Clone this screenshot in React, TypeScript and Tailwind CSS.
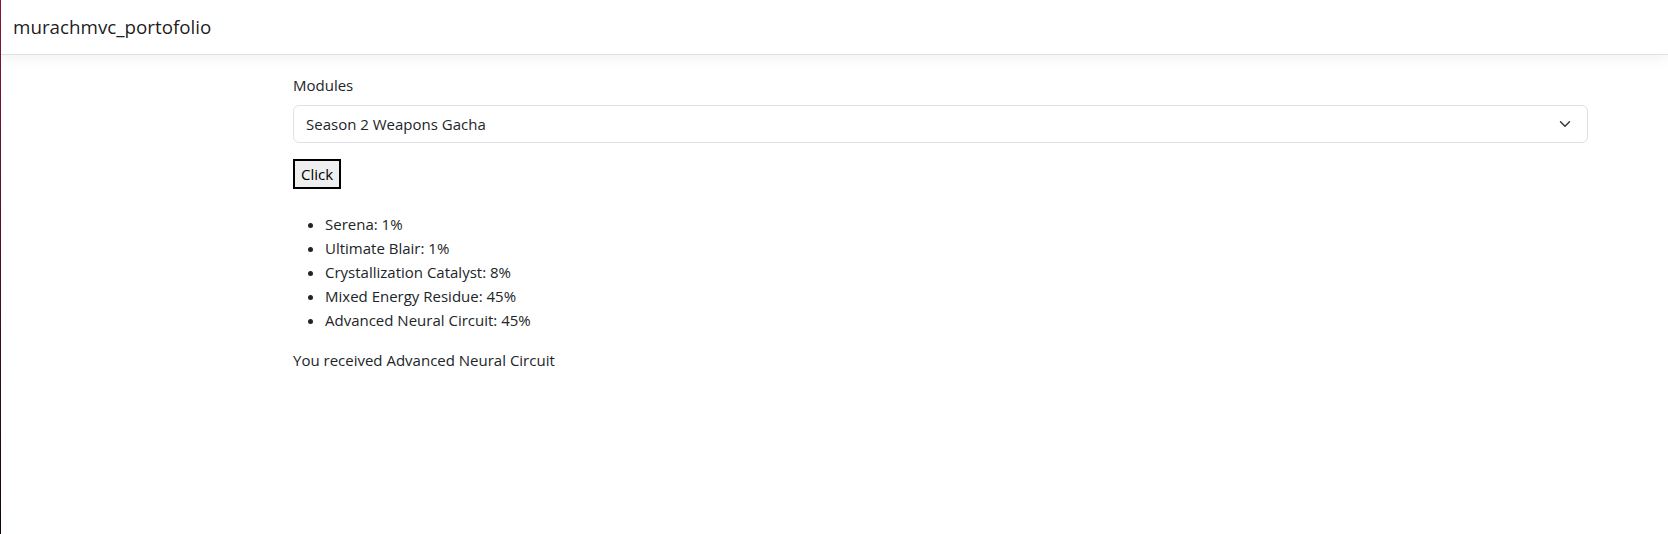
import React from 'react';

const rates = [
  { name: "Serena", rate: "1%" },
  { name: "Ultimate Blair", rate: "1%" },
  { name: "Crystallization Catalyst", rate: "8%" },
  { name: "Mixed Energy Residue", rate: "45%" },
  { name: "Advanced Neural Circuit", rate: "45%" }
];

export default function App() {
  return (
    <div className="relative min-h-[534px] bg-white text-[#212529] font-['Open_Sans',sans-serif] text-[15px] leading-6">
      {/* thin gradient edge on the left */}
      <div className="absolute left-0 top-0 h-full w-px bg-gradient-to-b from-[#8a1538] to-[#12060a]"></div>

      <header className="h-[55px] border-b border-[#dee2e6] bg-white shadow-[0_4px_12px_rgba(0,0,0,0.05)] flex items-center px-[13px]">
        <span className="text-[18.8px] text-black/90">murachmvc_portofolio</span>
      </header>

      <main className="ml-[293px] w-[1295px] pt-[18px]">
        <label className="block mb-2">Modules</label>
        <div className="relative h-[38px] border border-[#dee2e6] rounded-[6px] flex items-center pl-3">
          <span>Season 2 Weapons Gacha</span>
          <svg className="absolute right-[14px] top-[12px]" width="16" height="12" viewBox="0 0 16 16" fill="none" stroke="#343a40" strokeWidth="2" strokeLinecap="round" strokeLinejoin="round">
            <path d="M2 5l6 6 6-6" />
          </svg>
        </div>

        <button className="mt-4 h-[30px] px-[6px] bg-[#efefef] border-2 border-black text-black font-['Open_Sans',sans-serif] text-[15px]">
          Click
        </button>

        <ul className="mt-[23px] mb-4 pl-8 list-disc">
          {rates.map((r) => (
            <li key={r.name}>{r.name}: {r.rate}</li>
          ))}
        </ul>

        <p>You received Advanced Neural Circuit</p>
      </main>
    </div>
  );
}
